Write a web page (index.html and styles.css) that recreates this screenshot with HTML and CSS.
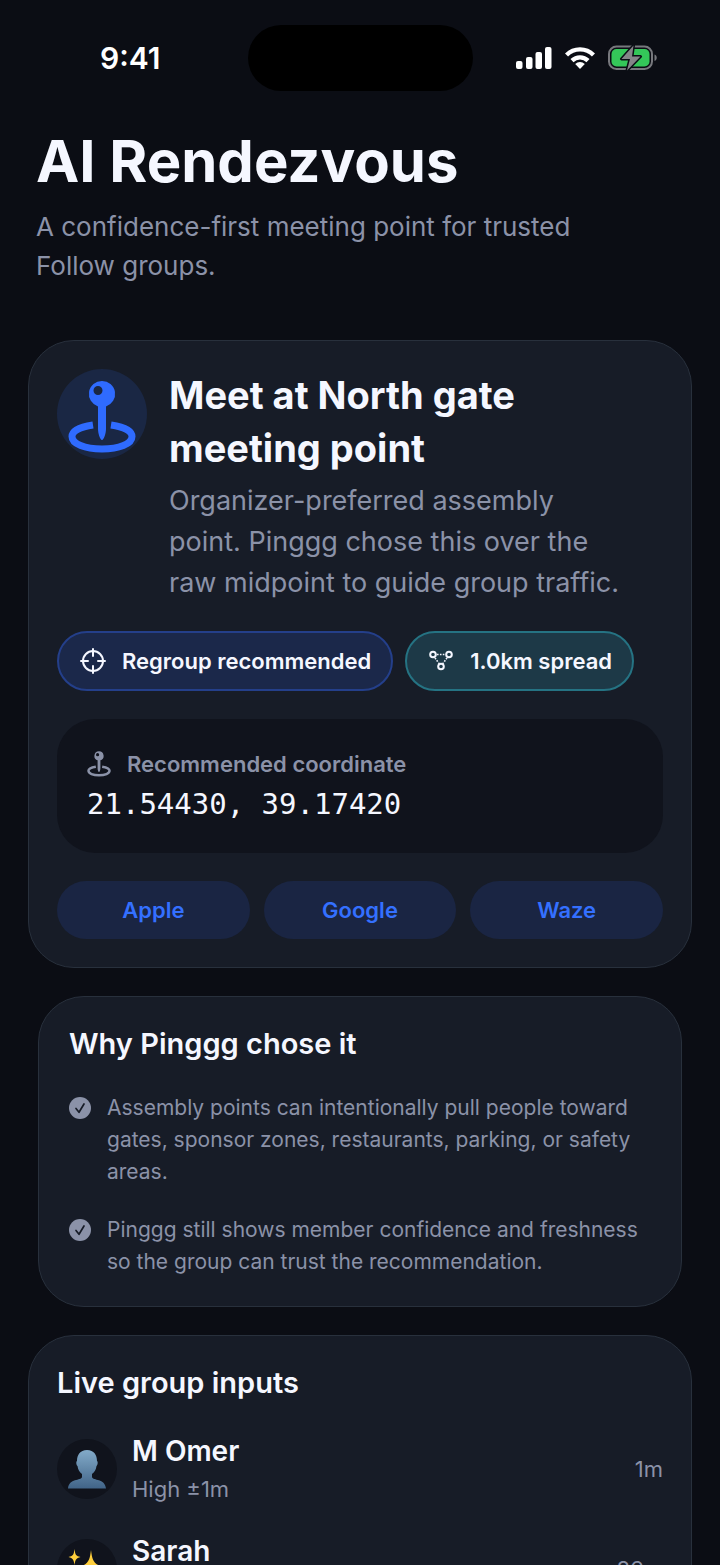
FILE: index.html
```html
<!DOCTYPE html>
<html lang="en">
<head>
<meta charset="utf-8">
<meta name="viewport" content="width=device-width, initial-scale=1">
<title>AI Rendezvous</title>
<link rel="stylesheet" href="styles.css">
</head>
<body>
<svg class="defs" aria-hidden="true">
  <symbol id="pin" viewBox="0 0 68 74">
    <path d="M25 45C12 47 4 51 4 56.500C4 64 17 69 34 69S64 64 64 56.500C64 51 56 47 43 45" fill="none" stroke="currentColor" stroke-width="7"/>
    <path fill="currentColor" fill-rule="evenodd" d="M34 1a13 13 0 0 1 4 25.400V49c0 4-2 11-4 11s-4-7-4-11V26.400A13 13 0 0 1 34 1zM30 6a4.500 4.500 0 1 0 0 9 4.500 4.500 0 0 0 0-9z"/>
  </symbol>
  <symbol id="check" viewBox="0 0 22 22">
    <circle cx="11" cy="11" r="11" fill="#8b92a8"/>
    <path d="M7 11.500l3 3.800L15 7" fill="none" stroke="#171c27" stroke-width="1.700" stroke-linecap="round" stroke-linejoin="round"/>
  </symbol>
</svg>
<div class="screen">
  <div class="status">
    <time class="clock">9:41</time>
    <div class="island"></div>
    <div class="indicators">
      <svg width="36" height="24" viewBox="0 0 36 24" fill="#fff" role="img" aria-label="Signal"><rect x="0" y="15" width="6.500" height="8" rx="2"/><rect x="10" y="11" width="6.500" height="12" rx="2"/><rect x="19.500" y="6" width="6.500" height="17" rx="2"/><rect x="29" y="1" width="6.500" height="22" rx="2"/></svg>
      <svg width="30" height="24" viewBox="0 0 30 24" role="img" aria-label="Wi-Fi"><path d="M1.500 9a19 19 0 0 1 27 0M7 14.600a11.500 11.500 0 0 1 16 0" fill="none" stroke="#fff" stroke-width="4.400"/><path d="M15 23l-4.800-5a7 7 0 0 1 9.600 0z" fill="#fff"/></svg>
      <svg width="50" height="26" viewBox="0 0 50 26" role="img" aria-label="Battery charging"><rect x="1" y="1.500" width="43" height="22.500" rx="7.500" fill="none" stroke="#77787d" stroke-width="2"/><path d="M46.500 9.500c3 1 3 5.500 0 6.500z" fill="#77787d"/><rect x="3.500" y="4" width="38" height="17.500" rx="5" fill="#34c759"/><path d="M25.500 0.500L13.500 14H22l-3 11.500L32.500 11.500H24z" fill="#858489" stroke="#0b0e15" stroke-width="3" paint-order="stroke" stroke-linejoin="round"/></svg>
    </div>
  </div>
  <main class="content">
    <header class="intro">
      <h1>AI Rendezvous</h1>
      <p>A confidence-first meeting point for trusted<br>Follow groups.</p>
    </header>
    <section class="card meet">
      <div class="place">
        <div class="badge"><svg width="68" height="74"><use href="#pin"/></svg></div>
        <div class="place-text">
          <h2>Meet at North gate<br>meeting point</h2>
          <p>Organizer-preferred assembly<br>point. Pinggg chose this over the<br>raw midpoint to guide group traffic.</p>
        </div>
      </div>
      <div class="chips">
        <span class="chip blue"><svg width="26" height="26" viewBox="0 0 26 26" fill="none" stroke="#f5f7ff" stroke-width="2" stroke-linecap="round"><circle cx="13" cy="13" r="10"/><path d="M13 1v7M13 18v7M1 13h7M18 13h7"/></svg>Regroup recommended</span>
        <span class="chip teal"><svg width="26" height="26" viewBox="0 0 26 26" fill="none" stroke="#f5f7ff" stroke-width="2"><circle cx="5" cy="6.500" r="2.800"/><circle cx="21" cy="6.500" r="2.800"/><circle cx="13" cy="18.500" r="2.800"/><path d="M9 6.500h8M7 10l4 5.500M19 10l-4 5.500" stroke-width="1.600" stroke-dasharray="1.600 1.300"/></svg>1.0km spread</span>
      </div>
      <div class="coordinate">
        <div class="coordinate-label"><svg width="24" height="26"><use href="#pin"/></svg>Recommended coordinate</div>
        <div class="coordinate-value">21.54430, 39.17420</div>
      </div>
      <div class="maps">
        <button type="button">Apple</button>
        <button type="button">Google</button>
        <button type="button">Waze</button>
      </div>
    </section>
    <section class="card why">
      <h3>Why Pinggg chose it</h3>
      <ul class="reasons">
        <li><svg width="22" height="22"><use href="#check"/></svg><span>Assembly points can intentionally pull people toward<br>gates, sponsor zones, restaurants, parking, or safety<br>areas.</span></li>
        <li><svg width="22" height="22"><use href="#check"/></svg><span>Pinggg still shows member confidence and freshness<br>so the group can trust the recommendation.</span></li>
      </ul>
    </section>
    <section class="card group">
      <h3>Live group inputs</h3>
      <ul class="members">
        <li>
          <div class="avatar"><svg width="38" height="40" viewBox="0 0 38 40"><defs><linearGradient id="person" x2="0" y2="1"><stop stop-color="#83abc9"/><stop offset="1" stop-color="#416488"/></linearGradient></defs><path fill="url(#person)" d="M19 1c7 0 10 5 10 11 1 0 1 4-.5 5-.6 4-2 6-4.500 8v3c1 4 13 1 14 11.500H0C1 29 13 32 14 28v-3c-2.500-2-3.900-4-4.500-8C8 16 8 12 9 12 9 6 12 1 19 1z"/></svg></div>
          <div class="member"><strong>M Omer</strong><span>High ±1m</span></div>
          <time>1m</time>
        </li>
        <li>
          <div class="avatar"><svg width="38" height="40" viewBox="0 0 38 40" fill="#ffcf3d"><path d="M23 1c1.500 12 3 14 14 18-11 4-12.500 6-14 18-1.500-12-3-14-14-18C20 15 21.500 13 23 1z"/><path d="M6.500 0c.8 6 1.500 7 6 8-4.500 1.500-5.200 2.500-6 8-.8-5.500-1.500-6.500-6-8 4.500-1 5.200-2 6-8z"/><path d="M9 25c.7 4 1.300 5 5 6-3.700 1-4.300 2-5 6-.7-4-1.300-5-5-6 3.700-1 4.300-2 5-6z"/></svg></div>
          <div class="member"><strong>Sarah</strong></div>
          <time>86m</time>
        </li>
      </ul>
    </section>
  </main>
</div>
</body>
</html>
```
FILE: styles.css
```css
* { box-sizing: border-box; }
body { margin: 0; background: #0b0d14; color: #f5f7ff; font-family: Inter, "Liberation Sans", sans-serif; }
h1, h2, h3, p, ul { margin: 0; padding: 0; }
ul { list-style: none; }
svg { display: block; flex: none; }
.defs { position: absolute; width: 0; height: 0; }
.screen { height: 100vh; overflow: hidden; }
.status { display: grid; grid-template-columns: 1fr auto 1fr; align-items: center; padding-top: 25px; }
.clock { padding-left: 100px; font-size: 30px; font-weight: 600; line-height: 36px; color: #fff; }
.island { width: 225px; height: 66px; border-radius: 33px; background: #000; }
.indicators { display: flex; align-items: center; justify-content: flex-end; gap: 13px; padding-right: 62px; }
.content { display: flex; flex-direction: column; gap: 28px; padding: 36px 28px 0; }
.intro { padding: 0 8px; margin-bottom: 27px; }
h1 { font-size: 58px; font-weight: 700; line-height: 68px; }
.intro p { margin-top: 12px; font-size: 26px; line-height: 39px; color: #8b92a8; }
.card { border: 1px solid #28303c; border-radius: 46px; background: #171c27; padding: 28px; }
.meet { display: flex; flex-direction: column; gap: 28px; }
.place { display: flex; gap: 22px; }
.badge { flex: none; display: flex; justify-content: center; padding-top: 11px; width: 90px; height: 90px; border-radius: 50%; background: #1a2744; color: #2f6bff; }
h2 { font-size: 38px; font-weight: 700; line-height: 53px; }
.place-text p { margin-top: 5px; font-size: 27px; line-height: 41px; color: #8b92a8; }
.chips { display: flex; gap: 12px; }
.chip { display: flex; align-items: center; gap: 16px; height: 60px; padding: 0 20px 0 21px; border: 2px solid; border-radius: 30px; font-size: 22px; font-weight: 600; white-space: nowrap; }
.blue { background: #1b284a; border-color: #243f8a; }
.teal { background: #1d3947; border-color: #257383; }
.coordinate { padding: 29px 30px; border-radius: 38px; background: #10131c; }
.coordinate-label { display: flex; align-items: center; gap: 16px; font-size: 22px; font-weight: 600; line-height: 32px; color: #8b92a8; }
.coordinate-value { margin-top: 4px; font-family: "DejaVu Sans Mono", "Liberation Mono", monospace; font-size: 29px; line-height: 40px; }
.maps { display: grid; grid-template-columns: repeat(3, 1fr); gap: 14px; }
.maps button { height: 58px; border: 0; border-radius: 29px; background: #1a2543; color: #3470ff; font: inherit; font-size: 22px; font-weight: 600; }
.why { margin: 0 10px; padding: 28px 30px; }
h3 { font-size: 29px; font-weight: 600; line-height: 38px; }
.reasons { display: flex; flex-direction: column; gap: 26px; margin-top: 29px; font-size: 21px; line-height: 32px; color: #8b92a8; }
.reasons li { display: flex; gap: 16px; white-space: nowrap; }
.reasons svg { margin-top: 5px; }
.members { display: flex; flex-direction: column; gap: 24px; margin-top: 29px; }
.members li { display: flex; align-items: center; gap: 15px; min-height: 76px; }
.avatar { display: flex; align-items: center; justify-content: center; width: 60px; height: 60px; border-radius: 50%; background: #10131c; }
.member { flex: 1; display: flex; flex-direction: column; align-self: flex-start; }
.member strong { font-size: 28px; font-weight: 600; line-height: 40px; }
.member span { font-size: 22px; line-height: 36px; color: #8b92a8; }
.members time { font-size: 22px; color: #8b92a8; }
```
